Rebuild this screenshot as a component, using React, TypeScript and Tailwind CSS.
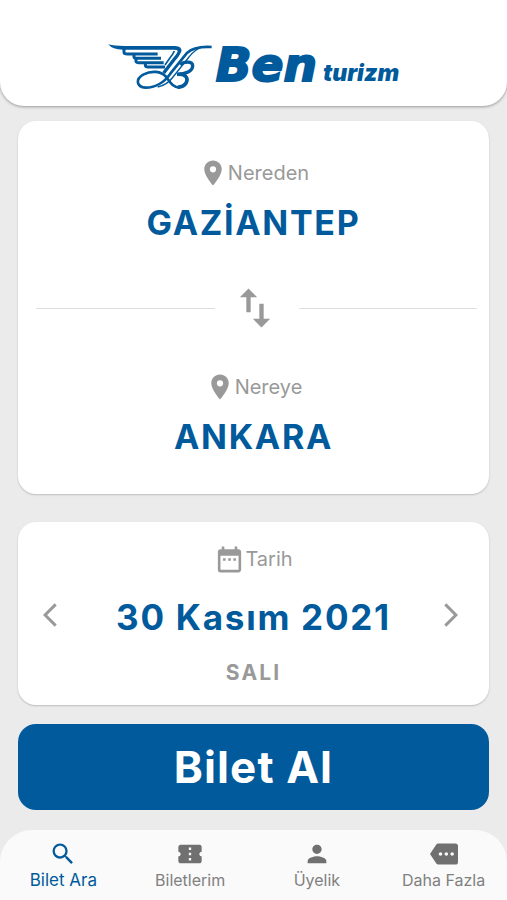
import {
  MdArrowBackIosNew,
  MdArrowForwardIos,
  MdConfirmationNumber,
  MdDateRange,
  MdLocationOn,
  MdMore,
  MdPerson,
  MdSearch,
  MdSwapVert,
} from "react-icons/md";
import type { IconType } from "react-icons";

const tabs: { label: string; icon: IconType; active?: boolean }[] = [
  { label: "Bilet Ara", icon: MdSearch, active: true },
  { label: "Biletlerim", icon: MdConfirmationNumber },
  { label: "Üyelik", icon: MdPerson },
  { label: "Daha Fazla", icon: MdMore },
];

function WingMark() {
  return (
    <svg viewBox="21 24 312 144" className="h-12 w-[104px]" fill="none" stroke="#005a9c" aria-hidden="true">
      {/* feathers */}
      <path d="M22 28 Q40 33 70 33 H222 Q244 34 241 50 L230 48 Q230 44 216 44 H66 Q34 44 22 28 Z" fill="#005a9c" stroke="none" />
      <path d="M69 40 V52 Q69 57 80 57 H170" strokeWidth="9" />
      <path d="M99 58 V66 Q99 70 108 70 H180" strokeWidth="9" />
      <path d="M105 72 V79 Q105 83 114 83 H188" strokeWidth="9" />
      <path d="M133 84 V90 Q133 96 142 96 H192" strokeWidth="9" />
      {/* double stem sweeping down from the wing */}
      <path d="M236 44 Q236 54 222 70 L188 114" strokeWidth="10" />
      <path d="M220 48 Q216 58 206 70 L192 90" strokeWidth="5" />
      {/* ribbon and loop */}
      <path
        d="M332 36 C296 34 274 38 258 54 L208 116 C190 142 162 158 134 158 C106 156 102 132 128 118 C152 106 180 108 196 126 C208 142 214 156 236 158"
        strokeWidth="8"
      />
      <path d="M300 38 C284 42 276 52 264 66 L216 126 C202 146 188 152 170 156" strokeWidth="4" />
      {/* bowls */}
      <path d="M238 90 C248 79 274 78 275 92 C275 108 254 118 228 118" strokeWidth="10" />
      <path d="M232 118 C254 116 264 130 254 146 C248 154 240 157 230 156" strokeWidth="11" />
    </svg>
  );
}

function CityButton({ label, city }: { label: string; city: string }) {
  return (
    <button type="button" className="flex w-full flex-col items-center gap-3">
      <span className="flex h-8 items-center text-xl text-[#999999]">
        <MdLocationOn size={30} />
        {label}
      </span>
      <span className="text-[34px] leading-[44px] font-bold tracking-wider text-[#005a9c]">{city}</span>
    </button>
  );
}

export default function App() {
  return (
    <div className="flex min-h-screen flex-col bg-[#ebebeb] font-['Inter','Liberation_Sans',sans-serif]">
      <header className="flex justify-center rounded-b-3xl bg-white pt-[43px] pb-[15px] shadow-[0_1px_3px_rgba(0,0,0,0.35)]">
        <h1 className="flex h-12 items-start gap-1 text-[#005a9c]">
          <WingMark />
          <span className="flex items-baseline gap-1.5 italic">
            <span className="font-['DejaVu_Sans',sans-serif] text-[47px] leading-[44px] font-bold [-webkit-text-stroke:2px_#005a9c]">
              Ben
            </span>
            <span className="text-[23px] leading-7 font-black">turizm</span>
          </span>
        </h1>
      </header>

      <main className="flex flex-1 flex-col px-[18px] pt-[15px] pb-5">
        <section className="rounded-[18px] bg-white px-[18px] pt-9 pb-[35px] shadow-[0_1px_2px_rgba(0,0,0,0.2)]">
          <CityButton label="Nereden" city="GAZİANTEP" />
          <div className="my-[37px] -mr-1.5 flex items-center">
            <span className="h-px flex-1 bg-[#dedede]" />
            <button type="button" aria-label="Yön değiştir" className="pr-[18px] pl-[14px] text-[#999999]">
              <MdSwapVert size={52} />
            </button>
            <span className="h-px flex-1 bg-[#dedede]" />
          </div>
          <CityButton label="Nereye" city="ANKARA" />
        </section>

        <section className="mt-7 flex items-center justify-between rounded-[18px] bg-white pt-[21px] pr-6 pb-[18px] pl-[18px] shadow-[0_1px_2px_rgba(0,0,0,0.2)]">
          <button type="button" aria-label="Önceki gün" className="text-[#999999]">
            <MdArrowBackIosNew size={28} />
          </button>
          <button type="button" className="flex flex-1 flex-col items-center gap-5 pl-1.5">
            <span className="flex h-8 items-center text-xl text-[#999999]">
              <MdDateRange size={31} />
              Tarih
            </span>
            <span className="text-[35px] leading-[44px] font-bold tracking-wider text-[#005a9c]">
              30 Kasım 2021
            </span>
            <span className="text-[21px] leading-7 font-bold tracking-widest text-[#999999]">SALI</span>
          </button>
          <button type="button" aria-label="Sonraki gün" className="text-[#999999]">
            <MdArrowForwardIos size={28} />
          </button>
        </section>

        <button
          type="button"
          className="mt-[19px] rounded-[18px] bg-[#005a9c] py-[15px] text-[44px] leading-[56px] font-bold tracking-wide text-white"
        >
          Bilet Al
        </button>
      </main>

      <nav className="grid grid-cols-4 rounded-t-[32px] bg-[#fafafa] pt-[10px] pb-2">
        {tabs.map(({ label, icon: Icon, active }) => (
          <a
            key={label}
            href="#"
            aria-current={active ? "page" : undefined}
            className={
              active
                ? "flex flex-col items-center text-[17px] leading-6 text-[#005a9c]"
                : "flex flex-col items-center text-base text-[#808080]"
            }
          >
            <Icon size={28} className={active ? "" : "text-[#707070]"} />
            {label}
          </a>
        ))}
      </nav>
    </div>
  );
}
